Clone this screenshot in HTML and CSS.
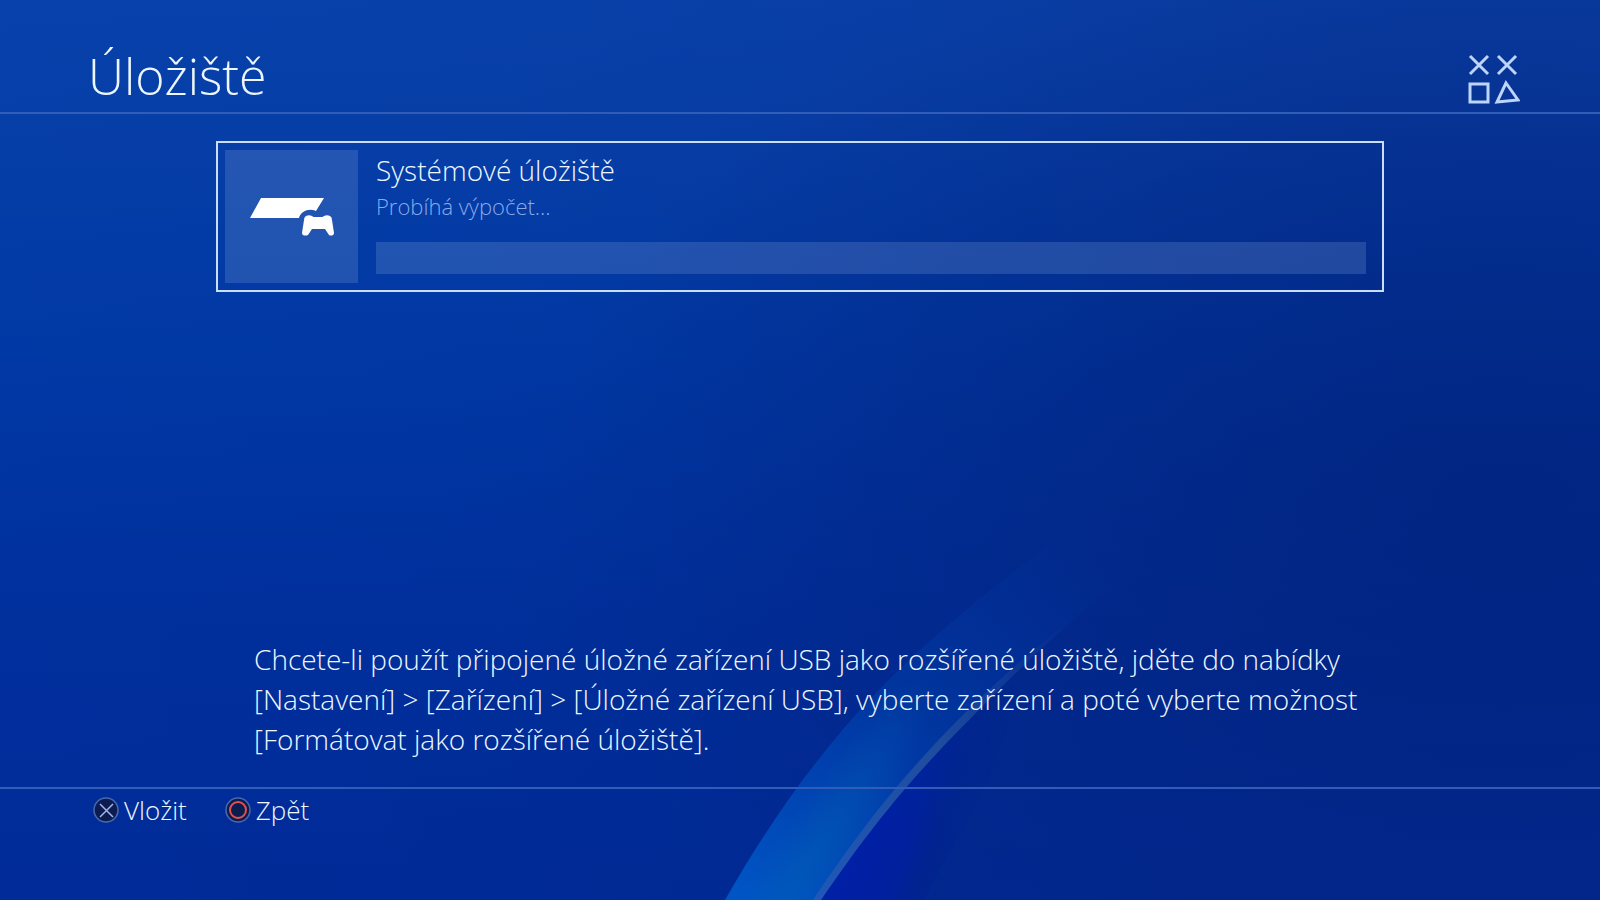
FILE: index.html
```html
<!DOCTYPE html>
<html lang="cs">
<head>
  <meta charset="UTF-8" />
  <meta name="viewport" content="width=device-width, initial-scale=1.0"/>
  <title>Úložiště</title>
  <link rel="stylesheet" href="styles.css">
</head>
<body>

<!-- Wave background -->
<svg class="backdrop" viewBox="0 0 1600 900" preserveAspectRatio="xMidYMax slice" aria-hidden="true">
  <defs>
    <linearGradient id="ribbon" gradientUnits="userSpaceOnUse" x1="780" y1="920" x2="1080" y2="540">
      <stop offset="0" stop-color="#0054c4"/>
      <stop offset="0.3" stop-color="#0043b2" stop-opacity="0.9"/>
      <stop offset="0.55" stop-color="#003aa4" stop-opacity="0.65"/>
      <stop offset="0.8" stop-color="#0036a0" stop-opacity="0.35"/>
      <stop offset="1" stop-color="#0036a0" stop-opacity="0"/>
    </linearGradient>
    <linearGradient id="edge" gradientUnits="userSpaceOnUse" x1="820" y1="900" x2="1080" y2="610">
      <stop offset="0" stop-color="#2058b8"/>
      <stop offset="0.5" stop-color="#1e4c9e"/>
      <stop offset="0.8" stop-color="#1c48a0" stop-opacity="0.4"/>
      <stop offset="1" stop-color="#1c48a0" stop-opacity="0"/>
    </linearGradient>
    <linearGradient id="shade" gradientUnits="userSpaceOnUse" x1="850" y1="860" x2="950" y2="898">
      <stop offset="0" stop-color="#0020a6"/>
      <stop offset="0.45" stop-color="#0020a0" stop-opacity="0.9"/>
      <stop offset="0.7" stop-color="#002090" stop-opacity="0.5"/>
      <stop offset="1" stop-color="#002090" stop-opacity="0"/>
    </linearGradient>
    <linearGradient id="fade" gradientUnits="userSpaceOnUse" x1="860" y1="900" x2="1010" y2="680">
      <stop offset="0.3" stop-color="#fff"/>
      <stop offset="1" stop-color="#000"/>
    </linearGradient>
    <mask id="shadeMask" maskUnits="userSpaceOnUse" x="700" y="500" width="450" height="400">
      <rect x="700" y="500" width="450" height="400" fill="url(#fade)"/>
    </mask>
    <radialGradient id="glow">
      <stop offset="0" stop-color="#0064b4" stop-opacity="0.4"/>
      <stop offset="1" stop-color="#0064b4" stop-opacity="0"/>
    </radialGradient>
    <clipPath id="ribbonClip">
      <path d="M725 900C785 795 850 710 940 632Q1000 580 1070 530L1130 575Q1040 640 962 718C905 775 865 825 815 900Z"/>
    </clipPath>
  </defs>
  <path mask="url(#shadeMask)" fill="url(#shade)" d="M820 900C870 825 910 775 970 718L1040 660Q1010 720 985 785C965 830 940 865 925 900Z"/>
  <g clip-path="url(#ribbonClip)">
    <rect x="700" y="500" width="450" height="400" fill="url(#ribbon)"/>
    <ellipse cx="0" cy="0" rx="220" ry="40" transform="translate(810 860) rotate(-57)" fill="url(#glow)"/>
  </g>
  <path fill="url(#edge)" d="M813 900C863 825 905 773 962 716Q1020 658 1085 610Q1020 666 971 718C911 778 871 827 821 900Z"/>
</svg>

<header class="topbar">
  <h1>Úložiště</h1>
  <svg class="symbols" viewBox="0 0 52 50" role="img" aria-label="Avatar">
    <path d="M2 2l18 18M20 2L2 20M30 2l18 18M48 2L30 20"/>
    <path d="M2 30h18v18H2zM38 29l12 17-21 2z"/>
  </svg>
</header>

<main>
  <button type="button" class="storage">
    <span class="tile">
      <svg viewBox="0 0 84 38" aria-hidden="true">
        <path d="M11 0H74L66 13C59 10 51 13 49 20H0Z"/>
        <path d="M56 18C58 17 60 17 62 18Q63 19 64 19H72Q73 19 74 18C76 17 78 17 80 18Q82 19 82 22L84 35C84 38 80 38 79 37L75 31H62L58 37C56 38 52 38 52 35L54 22Q54 19 56 18Z"/>
      </svg>
    </span>
    <span class="details">
      <span class="name">Systémové úložiště</span>
      <span class="status" id="status">Probíhá výpočet...</span>
      <progress class="usage" value="0" max="100" aria-labelledby="status"></progress>
    </span>
  </button>

  <p class="help">Chcete-li použít připojené úložné zařízení USB jako rozšířené úložiště, jděte do nabídky<br>
  [Nastavení] &gt; [Zařízení] &gt; [Úložné zařízení USB], vyberte zařízení a poté vyberte možnost<br>
  [Formátovat jako rozšířené úložiště].</p>
</main>

<footer class="actions">
  <button type="button">
    <svg viewBox="0 0 26 26" aria-hidden="true">
      <circle class="pad" cx="13" cy="13" r="12"/>
      <path class="cross" d="M7 7l13 13M20 7L7 20"/>
    </svg>
    Vložit
  </button>
  <button type="button">
    <svg viewBox="0 0 26 26" aria-hidden="true">
      <circle class="pad" cx="13" cy="13" r="12"/>
      <circle class="ring" cx="13" cy="13" r="8"/>
    </svg>
    Zpět
  </button>
</footer>

</body>
</html>
```
FILE: styles.css
```css
:root {
  --text:#ecf7ff; --muted:#86abea; --line:#315cb8; --focus:#c9defa;
  --panel:rgba(120,150,210,0.27);
}
*{box-sizing:border-box}
body{
  margin:0;min-height:100vh;display:flex;flex-direction:column;
  font-family:"Open Sans","Noto Sans",sans-serif;font-weight:300;font-size:28px;line-height:40px;
  color:var(--text);
  background:
    radial-gradient(ellipse 60% 65% at 94% 56%,rgba(0,34,124,0.75),rgba(0,34,124,0) 100%),
    linear-gradient(100deg,rgba(0,58,170,0.2) 0%,rgba(0,54,160,0.2) 30%,rgba(8,34,120,0.26) 80%),
    linear-gradient(180deg,#0a43ac 0%,#0840a8 14%,#0038a4 40%,#002d9a 70%,#002895 100%);
}
button{font:inherit;color:inherit;background:none;border:none;padding:0;cursor:pointer}
.backdrop{position:absolute;inset:0;width:100%;height:100%;z-index:-1}

.topbar{display:flex;justify-content:space-between;align-items:flex-end;
        height:114px;padding:0 80px 8px 88px;border-bottom:2px solid var(--line)}
h1{margin:0;font-size:50px;font-weight:300;line-height:56px}
.symbols{width:52px;height:50px;fill:none;stroke:#bdd5fb;stroke-width:3}

main{flex:1;display:flex;flex-direction:column;justify-content:space-between;
     width:73%;margin:0 auto;padding:27px 0 28px}
.storage{display:flex;gap:18px;padding:7px 16px 7px 7px;border:2px solid var(--focus);text-align:left}
.tile{flex:none;display:flex;align-items:center;justify-content:center;
      width:133px;height:133px;background:var(--panel)}
.tile svg{width:84px;height:38px;fill:#fff}
.details{flex:1;display:flex;flex-direction:column}
.status{font-size:22px;line-height:32px;color:var(--muted)}
.usage{appearance:none;display:block;width:100%;height:32px;margin-top:20px;border:none;background:var(--panel)}
.usage::-webkit-progress-bar{background:none}
.usage::-webkit-progress-value{background:var(--focus)}
.help{margin:0;padding:0 0 0 38px}

.actions{display:flex;gap:38px;height:113px;padding:1px 93px;border-top:2px solid var(--line);
         font-size:26px}
.actions button{display:flex;align-items:center;gap:5px;height:40px}
.actions svg{width:26px;height:26px;fill:none}
.pad{fill:#0d1c50;stroke:#4a69ab;stroke-width:1.5}
.cross{stroke:#a3b4e6;stroke-width:1.5}
.ring{stroke:#e2524d;stroke-width:2}
```
